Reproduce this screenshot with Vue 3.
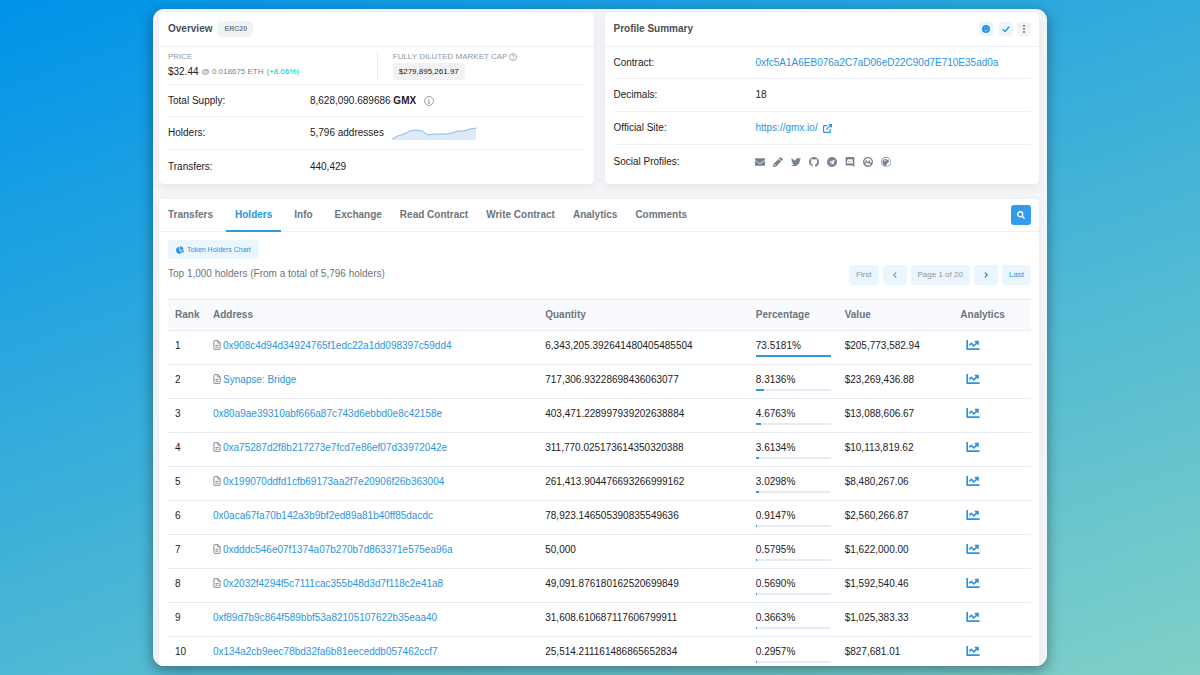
<template>
  <div class="page">
    <div class="window">
      <div class="summary">
        <section class="card">
          <header class="card-header">
            <h2>Overview</h2>
            <span class="badge">ERC20</span>
          </header>
          <div class="card-body">
            <div class="prices">
              <div class="price">
                <div class="caption">PRICE</div>
                <div class="price-line">
                  <span class="amount">$32.44</span>
                  <span class="eth">@ 0.018675 ETH</span>
                  <span class="change">(+8.06%)</span>
                </div>
              </div>
              <div class="price market">
                <div class="caption">
                  FULLY DILUTED MARKET CAP
                  <svg class="help" viewBox="0 0 16 16" fill="none" stroke="currentColor" stroke-width="1.5">
                    <circle cx="8" cy="8" r="7" />
                    <path d="M5.8 6.2c.2-1.4 1.2-2 2.3-2 1.3 0 2.3.8 2.3 2 0 1.6-2.3 1.7-2.3 3.3M8 11v1.6" />
                  </svg>
                </div>
                <button type="button" class="market-cap">$279,895,261.97</button>
              </div>
            </div>
            <dl class="rows">
              <div class="row">
                <dt>Total Supply:</dt>
                <dd>
                  <span>8,628,090.689686 <b>GMX</b></span>
                  <svg class="info" viewBox="0 0 16 16" fill="none" stroke="currentColor" stroke-width="1.2">
                    <circle cx="8" cy="8" r="7.2" />
                    <path d="M6.5 7H8v4.5M6.3 11.5h3.4M8 4v1.5" />
                  </svg>
                </dd>
              </div>
              <div class="row">
                <dt>Holders:</dt>
                <dd>
                  <span>5,796 addresses</span>
                  <svg class="sparkline" viewBox="0 0 84 14">
                    <polygon :points="`0,14 ${holdersTrend} 84,14`" fill="#dcebfa" />
                    <polyline :points="holdersTrend" fill="none" stroke="#8bb8e3" />
                  </svg>
                </dd>
              </div>
              <div class="row last">
                <dt>Transfers:</dt>
                <dd>440,429</dd>
              </div>
            </dl>
          </div>
        </section>

        <section class="card">
          <header class="card-header">
            <h2>Profile Summary</h2>
            <div class="actions">
              <button type="button" class="action" aria-label="Reputation">
                <svg viewBox="0 0 16 16">
                  <circle cx="8" cy="8" r="8" fill="currentColor" />
                  <path d="M5 5.5v1.5M11 5.5v1.5M4.5 10c1.8 2.4 5.2 2.4 7 0" fill="none" stroke="#b9dcfa" stroke-width="1.5" />
                </svg>
              </button>
              <button type="button" class="action" aria-label="Verified">
                <svg viewBox="0 0 16 16" fill="none" stroke="currentColor" stroke-width="2.8">
                  <path d="M1.5 8.5l4.5 4.5 8.5-9.5" />
                </svg>
              </button>
              <button type="button" class="action more" aria-label="More">
                <svg viewBox="0 0 16 16" fill="currentColor">
                  <rect x="6" y="0" width="4" height="4" rx="1.5" />
                  <rect x="6" y="6" width="4" height="4" rx="1.5" />
                  <rect x="6" y="12" width="4" height="4" rx="1.5" />
                </svg>
              </button>
            </div>
          </header>
          <dl class="card-body rows">
            <div class="row">
              <dt>Contract:</dt>
              <dd><a href="#">0xfc5A1A6EB076a2C7aD06eD22C90d7E710E35ad0a</a></dd>
            </div>
            <div class="row">
              <dt>Decimals:</dt>
              <dd>18</dd>
            </div>
            <div class="row">
              <dt>Official Site:</dt>
              <dd>
                <a href="#" class="site">
                  https://gmx.io/
                  <svg viewBox="0 0 16 16" fill="none" stroke="currentColor" stroke-width="2.2">
                    <path d="M8 3H2.5Q1 3 1 4.5v9Q1 15 2.5 15h9q1.5 0 1.5-1.5V9M6 10l8-8" />
                    <path d="M9 0h7v7z" fill="currentColor" stroke="none" />
                  </svg>
                </a>
              </dd>
            </div>
            <div class="row last">
              <dt>Social Profiles:</dt>
              <dd class="socials">
                <a v-for="social in socials" :key="social.name" href="#" :aria-label="social.name">
                  <svg :viewBox="social.box">
                    <path :d="social.path" fill="currentColor" fill-rule="evenodd" />
                  </svg>
                </a>
              </dd>
            </div>
          </dl>
        </section>
      </div>

      <section class="card holders">
        <div class="tab-bar">
          <nav class="tabs">
            <a
              v-for="tab in tabs"
              :key="tab.name"
              href="#"
              class="tab"
              :class="{ active: tab.name === activeTab, near: tab.near }"
              @click.prevent="activeTab = tab.name"
            >{{ tab.name }}</a>
          </nav>
          <button type="button" class="search" aria-label="Search">
            <svg viewBox="0 0 16 16" fill="none" stroke="currentColor" stroke-width="2.6">
              <circle cx="6.5" cy="6.5" r="5" />
              <path d="M10.3 10.3l4.7 4.7" />
            </svg>
          </button>
        </div>

        <div class="holders-body">
          <button type="button" class="chart-button">
            <svg viewBox="0 0 544 512" fill="currentColor">
              <path d="M527.79 288H290.5l158.03 158.03c6.04 6.04 15.98 6.53 22.19.68 38.7-36.46 65.32-85.61 73.13-140.86 1.34-9.46-6.51-17.85-16.06-17.85zm-15.83-64.8C503.72 103.74 408.26 8.28 288.8.04 279.68-.59 272 7.1 272 16.24V240h223.77c9.14 0 16.82-7.68 16.19-16.8zM224 288V50.71c0-9.55-8.39-17.4-17.84-16.06C86.99 51.49-4.1 155.6.14 280.37 4.5 408.51 114.83 513.59 243.03 511.98c50.4-.63 96.97-16.87 135.26-44.03 7.9-5.6 8.42-17.23 1.57-24.08L224 288z" />
            </svg>
            Token Holders Chart
          </button>
          <div class="toolbar">
            <p>Top 1,000 holders (From a total of 5,796 holders)</p>
            <div class="pager">
              <button type="button" disabled>First</button>
              <button type="button" class="arrow" disabled aria-label="Previous">
                <svg viewBox="0 0 8 8"><path d="M5.2 1.5L2.7 4l2.5 2.5" /></svg>
              </button>
              <span class="page-label">Page 1 of 20</span>
              <button type="button" class="arrow" aria-label="Next">
                <svg viewBox="0 0 8 8"><path d="M2.8 1.5L5.3 4 2.8 6.5" /></svg>
              </button>
              <button type="button">Last</button>
            </div>
          </div>

          <table>
            <thead>
              <tr>
                <th class="col-rank">Rank</th>
                <th class="col-address">Address</th>
                <th class="col-quantity">Quantity</th>
                <th class="col-percentage">Percentage</th>
                <th class="col-value">Value</th>
                <th class="col-analytics">Analytics</th>
              </tr>
            </thead>
            <tbody>
              <tr v-for="(holder, index) in holders" :key="holder.address">
                <td>{{ index + 1 }}</td>
                <td>
                  <span class="address">
                    <svg v-if="holder.contract" viewBox="0 0 12 16" fill="none" stroke="currentColor" stroke-width="1.5">
                      <path d="M1 2Q1 1 2 1h5.5L11 4.5V14q0 1-1 1H2q-1 0-1-1zM7.3 1v3.7H11M3.5 8.5h5M3.5 11.5h5" />
                    </svg>
                    <a href="#">{{ holder.address }}</a>
                  </span>
                </td>
                <td>{{ holder.quantity }}</td>
                <td>
                  {{ holder.percentage }}%
                  <div class="progress">
                    <div class="bar" :style="{ width: barWidth(holder.percentage) }"></div>
                  </div>
                </td>
                <td>{{ holder.value }}</td>
                <td>
                  <a href="#" class="chart-link" aria-label="Analytics">
                    <svg viewBox="0 64 512 384" fill="currentColor">
                      <path d="M496 384H64V80c0-8.84-7.16-16-16-16H16C7.16 64 0 71.16 0 80v336c0 17.67 14.33 32 32 32h464c8.84 0 16-7.16 16-16v-32c0-8.84-7.16-16-16-16zM464 96H345.94c-21.38 0-32.09 25.85-16.97 40.97l32.4 32.4L288 242.75l-73.37-73.37c-12.5-12.5-32.76-12.5-45.25 0l-68.69 68.69c-6.25 6.25-6.25 16.38 0 22.63l22.62 22.62c6.25 6.25 16.38 6.25 22.63 0L192 237.25l73.37 73.37c12.5 12.5 32.76 12.5 45.25 0l96-96 32.4 32.4c15.12 15.12 40.97 4.41 40.97-16.97V112c.01-8.84-7.15-16-15.99-16z" />
                    </svg>
                  </a>
                </td>
              </tr>
            </tbody>
          </table>
        </div>
      </section>
    </div>
  </div>
</template>

<script setup>
import { ref } from 'vue'

const activeTab = ref('Holders')

const tabs = [
  { name: 'Transfers' },
  { name: 'Holders' },
  { name: 'Info' },
  { name: 'Exchange', near: true },
  { name: 'Read Contract', near: true },
  { name: 'Write Contract', near: true },
  { name: 'Analytics', near: true },
  { name: 'Comments', near: true },
]

const holdersTrend = '0,13 6,10 12,8 18,5 24,4 30,5 36,9 42,8 48,8 54,8 60,7 66,5 72,5 78,3 84,2'

const holders = [
  { address: '0x908c4d94d34924765f1edc22a1dd098397c59dd4', contract: true, quantity: '6,343,205.392641480405485504', percentage: '73.5181', value: '$205,773,582.94' },
  { address: 'Synapse: Bridge', contract: true, quantity: '717,306.93228698436063077', percentage: '8.3136', value: '$23,269,436.88' },
  { address: '0x80a9ae39310abf666a87c743d6ebbd0e8c42158e', contract: false, quantity: '403,471.228997939202638884', percentage: '4.6763', value: '$13,088,606.67' },
  { address: '0xa75287d2f8b217273e7fcd7e86ef07d33972042e', contract: true, quantity: '311,770.025173614350320388', percentage: '3.6134', value: '$10,113,819.62' },
  { address: '0x199070ddfd1cfb69173aa2f7e20906f26b363004', contract: true, quantity: '261,413.904476693266999162', percentage: '3.0298', value: '$8,480,267.06' },
  { address: '0x0aca67fa70b142a3b9bf2ed89a81b40ff85dacdc', contract: false, quantity: '78,923.146505390835549636', percentage: '0.9147', value: '$2,560,266.87' },
  { address: '0xdddc546e07f1374a07b270b7d863371e575ea96a', contract: true, quantity: '50,000', percentage: '0.5795', value: '$1,622,000.00' },
  { address: '0x2032f4294f5c7111cac355b48d3d7f118c2e41a8', contract: true, quantity: '49,091.876180162520699849', percentage: '0.5690', value: '$1,592,540.46' },
  { address: '0xf89d7b9c864f589bbf53a82105107622b35eaa40', contract: false, quantity: '31,608.610687117606799911', percentage: '0.3663', value: '$1,025,383.33' },
  { address: '0x134a2cb9eec78bd32fa6b81eeceddb057462ccf7', contract: false, quantity: '25,514.211161486865652834', percentage: '0.2957', value: '$827,681.01' },
]

// The bars are relative to the biggest holder
function barWidth(percentage) {
  return (Number(percentage) / Number(holders[0].percentage)) * 100 + '%'
}

const socials = [
  {
    name: 'Email',
    box: '0 0 512 512',
    path: 'M502.3 190.8c3.9-3.1 9.7-.2 9.7 4.7V400c0 26.5-21.5 48-48 48H48c-26.5 0-48-21.5-48-48V195.6c0-5 5.7-7.8 9.7-4.7 22.4 17.4 52.1 39.5 154.1 113.6 21.1 15.4 56.7 47.8 92.2 47.6 35.7.3 72-32.8 92.3-47.6 102-74.1 131.6-96.3 154-113.7zM256 320c23.2.4 56.6-29.2 73.4-41.4 132.7-96.3 142.8-104.7 173.4-128.7 5.8-4.5 9.2-11.5 9.2-18.9v-19c0-26.5-21.5-48-48-48H48c-26.5 0-48 21.5-48 48v19c0 7.4 3.4 14.3 9.2 18.9 30.6 23.9 40.7 32.4 173.4 128.7 16.8 12.2 50.2 41.8 73.4 41.4z',
  },
  {
    name: 'Blog',
    box: '0 0 16 16',
    path: 'M11 .9q1.2-1.2 2.4 0l1.7 1.7q1.2 1.2 0 2.4L13.7 6.4 9.6 2.3zM8.8 3.1l4.1 4.1-8.3 8.3L0 16l.5-4.6zM2.3 11.8l-.4 2.3 2.3-.4v-1.2H3.5v-.7z',
  },
  {
    name: 'Twitter',
    box: '0 0 512 512',
    path: 'M459.37 151.716c.325 4.548.325 9.097.325 13.645 0 138.72-105.583 298.558-298.558 298.558-59.452 0-114.68-17.219-161.137-47.106 8.447.974 16.568 1.299 25.34 1.299 49.055 0 94.213-16.568 130.274-44.832-46.132-.975-84.792-31.188-98.112-72.772 6.498.974 12.995 1.624 19.818 1.624 9.421 0 18.843-1.3 27.614-3.573-48.081-9.747-84.143-51.98-84.143-102.985v-1.299c13.969 7.797 30.214 12.67 47.431 13.319-28.264-18.843-46.781-51.005-46.781-87.391 0-19.492 5.197-37.36 14.294-52.954 51.655 63.675 129.3 105.258 216.365 109.807-1.624-7.797-2.599-15.918-2.599-24.04 0-57.828 46.782-104.934 104.934-104.934 30.213 0 57.502 12.67 76.67 33.137 23.715-4.548 46.456-13.32 66.599-25.34-7.798 24.366-24.366 44.833-46.132 57.827 21.117-2.273 41.584-8.122 60.426-16.243-14.292 20.791-32.161 39.308-52.628 54.253z',
  },
  {
    name: 'Github',
    box: '0 0 16 16',
    path: 'M8 0C3.58 0 0 3.58 0 8c0 3.54 2.29 6.53 5.47 7.59.4.07.55-.17.55-.38 0-.19-.01-.82-.01-1.49-2.01.37-2.53-.49-2.69-.94-.09-.23-.48-.94-.82-1.13-.28-.15-.68-.52-.01-.53.63-.01 1.08.58 1.23.82.72 1.21 1.87.87 2.33.66.07-.52.28-.87.51-1.07-1.78-.2-3.64-.89-3.64-3.95 0-.87.31-1.59.82-2.15-.08-.2-.36-1.02.08-2.12 0 0 .67-.21 2.2.82.64-.18 1.32-.27 2-.27s1.36.09 2 .27c1.53-1.04 2.2-.82 2.2-.82.44 1.1.16 1.92.08 2.12.51.56.82 1.27.82 2.15 0 3.07-1.87 3.75-3.65 3.95.29.25.54.73.54 1.48 0 1.07-.01 1.93-.01 2.2 0 .21.15.46.55.38A8.01 8.01 0 0 0 16 8c0-4.42-3.58-8-8-8z',
  },
  {
    name: 'Telegram',
    box: '0 0 16 16',
    path: 'M8 0a8 8 0 1 1 0 16A8 8 0 0 1 8 0zM12.2 4.2L3 7.8l2.5 1 .8 3 1.6-1.4 2.5 1.9zM10.5 5.8L6.8 9.5l-.3 1-.4-2z',
  },
  {
    name: 'Discord',
    box: '0 0 16 16',
    path: 'M2.5 0h11Q15 0 15 1.5V16l-3-2.5H2.5Q1 13.5 1 12V1.5Q1 0 2.5 0zM4.5 3.7Q3.2 6 3 9.5q1 1.2 2.5 1.2l.7-.9h3.6l.7.9q1.5 0 2.5-1.2Q12.8 6 11.5 3.7L9.7 3.2 9.3 4H6.7l-.4-.8zM6.2 6.2a1 1 0 1 1 0 2 1 1 0 0 1 0-2zM9.8 6.2a1 1 0 1 1 0 2 1 1 0 0 1 0-2z',
  },
  {
    name: 'CoinMarketCap',
    box: '0 0 16 16',
    path: 'M8 0a8 8 0 1 1 0 16A8 8 0 0 1 8 0zM8 2a6 6 0 0 0-5.7 7.5L5.4 4.2l2.5 4 2.7-4 1.2 4.8q2 .5 2.1-1.5A6 6 0 0 0 8 2zM3.5 11.2a6 6 0 0 0 9.2.4q-2.5.6-3-3L7.9 11.5 6 8z',
  },
  {
    name: 'CoinGecko',
    box: '0 0 16 16',
    path: 'M8 0a8 8 0 1 1 0 16A8 8 0 0 1 8 0zM8 1a7 7 0 1 0 0 14A7 7 0 0 0 8 1zM3 5.5Q5 2 8.5 3.5q3.5.5 4.5 3Q13 9 9.5 10.2q0 2.3-1.5 4Q3.5 14 2.4 10 2 7.5 3 5.5zM6.5 4.8a1.2 1.2 0 1 0 0 2.4 1.2 1.2 0 0 0 0-2.4z',
  },
]
</script>

<style>
body {
  margin: 0;
}
</style>

<style scoped>
.page {
  box-sizing: border-box;
  display: flex;
  height: 100vh;
  padding: 9px 0;
  background: linear-gradient(160deg, #0093e9 0%, #80d0c7 100%);
  color: #1e2022;
  font-family: "Liberation Sans", Arial, sans-serif;
  font-size: 10px;
  line-height: 12px;
}

.page *,
.page *::before {
  box-sizing: border-box;
}

.window {
  width: 74.5%;
  margin: 0 auto;
  padding: 3px 8px 0 6px;
  overflow: hidden;
  border-radius: 11px;
  background: #f4f5f8;
  box-shadow: 0 4px 14px rgba(0, 0, 0, 0.4);
}

a {
  color: #2b94e1;
  text-decoration: none;
}

button {
  padding: 0;
  border: 0;
  font-family: inherit;
  cursor: pointer;
}

svg {
  display: block;
  flex: none;
}

.card {
  border-radius: 5px;
  background: #fff;
  box-shadow: 0 3px 9px rgba(140, 152, 164, 0.15);
}

/* Overview and profile */
.summary {
  display: grid;
  grid-template-columns: 1fr 1fr;
  gap: 11px;
}

.card-header {
  display: flex;
  align-items: center;
  height: 35px;
  padding: 0 8px 0 9px;
  border-bottom: 1px solid #edeff4;
}

.card-header h2 {
  margin: 0;
  color: #4a4f55;
  font-size: 10px;
}

.badge {
  margin-left: 6px;
  padding: 2px 6px;
  border-radius: 4px;
  background: #f1f2f4;
  color: #77838f;
  font-size: 7px;
  font-weight: bold;
}

.actions {
  display: flex;
  gap: 4px;
  margin-left: auto;
}

.action {
  display: flex;
  align-items: center;
  justify-content: center;
  width: 14px;
  height: 14px;
  border-radius: 3px;
  background: #ebf5fd;
  color: #2b94e1;
}

.action:first-child {
  margin-right: 2px;
}

.action.more {
  background: #f1f2f4;
  color: #77838f;
}

.action svg {
  width: 8px;
  height: 8px;
}

.card-body {
  padding: 0 8px 0 9px;
}

.prices {
  display: grid;
  grid-template-columns: 1fr 1fr;
  padding: 4px 0;
  border-bottom: 1px solid #edeff4;
}

.market {
  padding-left: 15px;
  border-left: 1px solid #edeff4;
}

.caption {
  display: flex;
  align-items: center;
  gap: 2px;
  color: #8c98a4;
  font-size: 8px;
}

.help {
  width: 8px;
  height: 8px;
}

.price-line {
  display: flex;
  align-items: center;
  gap: 3px;
  height: 17px;
  font-size: 8px;
}

.amount {
  font-size: 10px;
}

.eth {
  color: #77838f;
}

.change {
  color: #00c9a7;
}

.market-cap {
  height: 17px;
  padding: 0 6px;
  border-radius: 4px;
  background: #f1f2f4;
  color: #1e2022;
  font-size: 8px;
}

.rows {
  margin: 0;
}

.row {
  display: grid;
  grid-template-columns: 34% 1fr;
  align-items: center;
  min-height: 32px;
  border-bottom: 1px solid #edeff4;
}

.row + .row {
  min-height: 33px;
}

.row.last {
  min-height: 34px;
  border-bottom: 0;
}

.row dd {
  display: flex;
  align-items: center;
  gap: 8px;
  margin: 0;
}

.info {
  width: 10px;
  height: 10px;
  color: #77838f;
}

.sparkline {
  width: 84px;
  height: 14px;
}

.site {
  display: flex;
  align-items: center;
  gap: 5px;
}

.site svg {
  width: 9px;
  height: 9px;
}

.socials a {
  color: #77838f;
}

.socials svg {
  width: 10px;
  height: 10px;
}

/* Holders */
.holders {
  margin-top: 15px;
}

.tab-bar {
  display: flex;
  justify-content: space-between;
  height: 33px;
  padding-right: 8px;
  border-bottom: 1px solid #edeff4;
}

.tabs {
  display: flex;
}

.tab {
  height: 33px;
  margin-right: 4px;
  padding: 10px 9px 0;
  border-bottom: 2px solid transparent;
  color: #6c757e;
  font-weight: bold;
}

.tab.near {
  margin-right: 0;
}

.tab.active {
  border-color: #3498db;
  color: #2b94e1;
}

.search {
  display: flex;
  align-items: center;
  justify-content: center;
  width: 20px;
  height: 20px;
  margin-top: 6px;
  border-radius: 3px;
  background: #2f9cf0;
  color: #fff;
}

.search svg {
  width: 8px;
  height: 8px;
}

.holders-body {
  padding: 8px 8px 0 9px;
}

.chart-button {
  display: flex;
  align-items: center;
  gap: 3px;
  height: 19px;
  padding: 0 8px;
  border-radius: 3px;
  background: #ebf5fd;
  color: #2b94e1;
  font-size: 7px;
}

.chart-button svg {
  width: 8px;
  height: 8px;
}

.toolbar {
  display: flex;
  justify-content: space-between;
  margin: 6px 0 14px;
}

.toolbar p {
  margin: 0;
  color: #6c757e;
  line-height: 18px;
}

.pager {
  display: flex;
  gap: 4px;
}

.pager button,
.page-label {
  height: 20px;
  padding: 0 7px;
  border-radius: 4px;
  background: #ebf5fd;
  color: #2b94e1;
  font-size: 8px;
  line-height: 20px;
}

.pager button:disabled,
.page-label {
  color: #8c98a4;
}

.pager .arrow {
  padding: 0 8px;
}

.arrow svg {
  width: 8px;
  height: 8px;
  fill: none;
  stroke: currentColor;
  stroke-width: 1.2;
}

table {
  width: 100%;
  border-collapse: collapse;
  table-layout: fixed;
}

th {
  height: 31px;
  padding: 0 7px;
  border-top: 1px solid #e7eaf3;
  border-bottom: 1px solid #e7eaf3;
  background: #f8fafd;
  color: #6c757e;
  text-align: left;
}

td {
  height: 34px;
  padding: 9px 7px 0;
  border-bottom: 1px solid #e7eaf3;
  vertical-align: top;
}

.col-rank {
  width: 4.4%;
}

.col-address {
  width: 38.5%;
}

.col-quantity {
  width: 24.4%;
}

.col-percentage {
  width: 10.3%;
}

.col-value {
  width: 13.4%;
}

.col-analytics {
  width: 9%;
}

.address {
  display: flex;
  align-items: flex-start;
  gap: 2px;
}

.address svg {
  width: 8px;
  height: 10px;
  color: #77838f;
}

.progress {
  height: 2px;
  margin-top: 3px;
  background: #e7eaf3;
}

.bar {
  height: 100%;
  background: #3498db;
}

.chart-link svg {
  width: 14px;
  height: 10px;
  margin-left: 6px;
}
</style>
